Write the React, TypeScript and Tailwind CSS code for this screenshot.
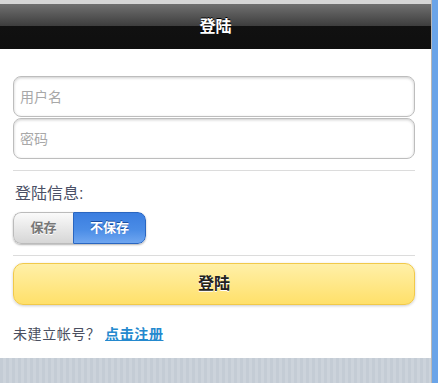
export default function App() {
  const font = { fontFamily: '"Liberation Sans", "Noto Sans CJK SC", sans-serif' };
  return (
    <div className="flex h-[383px] w-[439px] overflow-hidden bg-white" style={font}>
      <div className="flex w-[432px] flex-col border-r border-[#b8b8b8]">
        <div className="h-[4px] bg-[#d6d6d6]" />
        <div className="relative flex h-[45px] items-center justify-center bg-[linear-gradient(#707070,#3c3c3c_50%,#111111_50%,#0f0f0f)]">
          <h1 className="text-[16px] font-bold text-white [text-shadow:0_-1px_0_#000]">登陆</h1>
        </div>
        <div className="flex flex-1 flex-col px-[13px] pt-[27px]">
          <div className="flex flex-col gap-[1px]">
            <input
              placeholder="用户名"
              className="h-[41px] w-[402px] rounded-[8px] border border-[#bdbdbd] px-[6px] text-[14px] text-[#333] shadow-[inset_0_1px_3px_rgba(0,0,0,0.2)] placeholder:text-[#a8a8a8] outline-none"
            />
            <input
              placeholder="密码"
              type="password"
              className="h-[41px] w-[402px] rounded-[8px] border border-[#bdbdbd] px-[6px] text-[14px] text-[#333] shadow-[inset_0_1px_3px_rgba(0,0,0,0.2)] placeholder:text-[#a8a8a8] outline-none"
            />
          </div>
          <div className="mt-[11px] h-px w-[402px] bg-[#dcdcdc]" />
          <div className="mt-[14px] pl-[2px] text-[16px] leading-[18px] text-[#4b5066]">登陆信息:</div>
          <div className="mt-[9px] flex h-[32px] w-[133px] overflow-hidden rounded-[8px] shadow-[0_1px_2px_rgba(0,0,0,0.3)]">
            <button className="w-[60px] border border-r-0 border-[#bbb] rounded-l-[8px] bg-[linear-gradient(#fafafa,#d6d6d6)] text-[13px] font-bold text-[#777] [text-shadow:0_1px_0_#fff]">
              保存
            </button>
            <button className="flex-1 border border-[#2a66c0] rounded-r-[8px] bg-[linear-gradient(#3b7ee0,#4a8ce6_55%,#6fa6f0)] text-[13px] font-bold text-white [text-shadow:0_-1px_0_#1d4fa0]">
              不保存
            </button>
          </div>
          <div className="mt-[11px] h-px w-[402px] bg-[#dcdcdc]" />
          <button className="mt-[7px] h-[42px] w-[402px] rounded-[10px] border border-[#f1c94a] bg-[linear-gradient(#fff0a8,#ffe06a)] text-[16px] font-bold text-[#222] shadow-[0_1px_3px_rgba(0,0,0,0.2)] [text-shadow:0_1px_0_#fff]">
            登陆
          </button>
          <div className="mt-[19px] text-[14px] tracking-[0.6px] text-[#4a4f60]">
            未建立帐号？ <a className="font-bold text-[#2489ce] underline">点击注册</a>
          </div>
        </div>
        <div className="h-[25px] bg-[repeating-linear-gradient(90deg,#c4ccd5_0px,#c4ccd5_3px,#ccd3db_3px,#ccd3db_6px)]" />
      </div>
      <div className="w-[6px] bg-[#6aa4e8]" />
    </div>
  );
}
